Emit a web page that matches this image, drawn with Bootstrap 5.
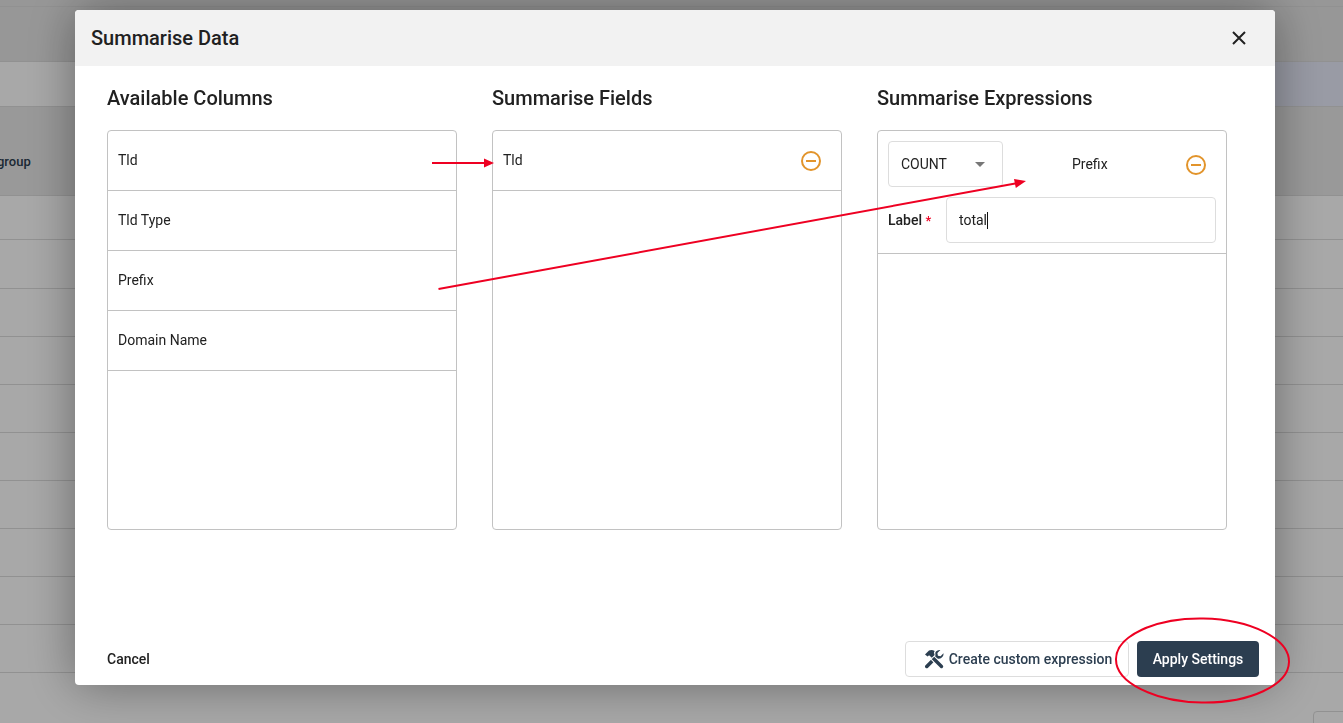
<!DOCTYPE html>
<html lang="en">
<head>
<meta charset="utf-8">
<title>Summarise Data</title>
<link href="https://cdn.jsdelivr.net/npm/bootstrap@5.3.0/dist/css/bootstrap.min.css" rel="stylesheet">
<style>
html,body{height:100%;overflow:hidden}
body{font-family:Roboto,"Liberation Sans",sans-serif;font-size:14px;color:#212121;background:#fff}
.page-rows{display:grid;grid-template-rows:7px 55px 45px 89px 44px 49px repeat(8,48px) 1fr;height:723px}
.page-row{border-bottom:1px solid #ddd;padding-top:48px;color:#2c3e50;font-weight:500;font-size:13px;line-height:14px;overflow:hidden;text-indent:-3px}
.page-row.plain{padding:0}
.row-top{background:#e6e6e6}
.row-sel{background:linear-gradient(90deg,#fff 0 700px,#e8ebfa 700px)}
.row-hover{background:#e9e9e9}
.page-row.last{border:0;position:relative;overflow:visible}
.pager-box{position:absolute;left:1313px;top:38px;width:60px;height:40px;border:1px solid #ddd;border-radius:4px}
.modal-backdrop.show{opacity:.34}
.sum-dialog{max-width:1200px;width:1200px;margin:10px 0 0 75px}
.sum-content{height:675px;border:0;border-radius:4px;box-shadow:0 0 50px rgba(0,0,0,.38)}
.sum-header{height:56px;padding:0 16px;background:#f2f2f2;border:0;border-radius:4px 4px 0 0}
.sum-title{font-size:20px;font-weight:500;line-height:24px;color:#212121}
.sum-close{width:16px;height:16px;padding:0;margin-right:12px;background:none;border:0;line-height:0;color:#212121}
.sum-body{padding:20px 32px 0;gap:35px}
.sum-col{width:350px}
.sum-col-title{font-size:20px;font-weight:500;line-height:24px;margin:0 0 20px;color:#212121}
.sum-panel{height:400px;border:1px solid #c2c2c2;border-radius:4px;overflow:hidden}
.sum-item{height:60px;padding:0 20px 2px 10px;border-bottom:1px solid #c2c2c2;line-height:20px;color:#212121}
.sum-minus{margin-top:2px}
.sum-expr{height:123px;padding:10px;border-bottom:1px solid #c2c2c2;gap:10px}
.sum-select{width:115px;height:46px;padding:0 12px;font-size:14px;color:#212121;border-color:#ddd;border-radius:4px;background-size:10px 5px;background-position:right 17px center;background-image:url("data:image/svg+xml,%3Csvg xmlns='http://www.w3.org/2000/svg' viewBox='0 0 10 5'%3E%3Cpath d='M0 0h10L5 5z' fill='%23777'/%3E%3C/svg%3E")}
.sum-field{width:270px;height:46px;padding:0 12px;font-size:14px;border-color:#ddd;border-radius:4px;color:#212121}
.sum-caret{display:inline-block;width:1px;height:17px;background:#111}
.expr-name{margin-left:69px;width:114px}
.expr-label{width:58px;font-weight:500}
.req{color:#ee0022;font-size:13px}
.sum-footer{height:36px;margin:auto 16px 8px 32px}
.btn-cancel{padding:0;font-size:14px;font-weight:500;color:#212121;border:0}
.btn-custom{width:224px;height:36px;padding:0 0 0 2px;font-size:14px;font-weight:500;color:#2c3e50;background:#fff;border:1px solid #ddd;border-radius:4px;gap:5px}
.btn-apply{width:122px;height:36px;padding:0;font-size:14px;font-weight:500;color:#fff;background:#2c3e50;border:0;border-radius:4px}
.notes{position:fixed;left:0;top:0;width:1343px;height:723px;z-index:1060;pointer-events:none}
</style>
</head>
<body>
<div class="page-rows">
  <div class="page-row plain row-top"></div>
  <div class="page-row plain row-top"></div>
  <div class="page-row plain row-sel"></div>
  <div class="page-row row-hover">group</div>
  <div class="page-row plain"></div>
  <div class="page-row plain"></div>
  <div class="page-row plain"></div>
  <div class="page-row plain"></div>
  <div class="page-row plain"></div>
  <div class="page-row plain"></div>
  <div class="page-row plain"></div>
  <div class="page-row plain"></div>
  <div class="page-row plain"></div>
  <div class="page-row plain"></div>
  <div class="page-row plain last"><div class="pager-box"></div></div>
</div>

<div class="modal-backdrop fade show"></div>
<div class="modal d-block" tabindex="-1">
  <div class="modal-dialog sum-dialog">
    <div class="modal-content sum-content">
      <div class="modal-header sum-header d-flex justify-content-between align-items-center">
        <h5 class="modal-title sum-title">Summarise Data</h5>
        <button type="button" class="sum-close" aria-label="Close">
          <svg width="16" height="16" viewBox="0 0 16 16"><path d="M2 2l12 12M14 2L2 14" stroke="currentColor" stroke-width="2" fill="none"/></svg>
        </button>
      </div>
      <div class="modal-body sum-body d-flex flex-grow-0">
        <div class="sum-col">
          <h6 class="sum-col-title">Available Columns</h6>
          <div class="sum-panel">
            <div class="sum-item d-flex align-items-center">Tld</div>
            <div class="sum-item d-flex align-items-center">Tld Type</div>
            <div class="sum-item d-flex align-items-center">Prefix</div>
            <div class="sum-item d-flex align-items-center">Domain Name</div>
          </div>
        </div>
        <div class="sum-col">
          <h6 class="sum-col-title">Summarise Fields</h6>
          <div class="sum-panel">
            <div class="sum-item d-flex align-items-center justify-content-between">
              <span>Tld</span>
              <svg class="sum-minus" width="20" height="20" viewBox="0 0 20 20"><circle cx="10" cy="10" r="9" fill="none" stroke="#e2942b" stroke-width="2"/><path d="M5 10h10" stroke="#e2942b" stroke-width="2"/></svg>
            </div>
          </div>
        </div>
        <div class="sum-col">
          <h6 class="sum-col-title">Summarise Expressions</h6>
          <div class="sum-panel">
            <div class="sum-expr d-flex flex-column">
              <div class="d-flex align-items-center">
                <select class="form-select sum-select"><option>COUNT</option></select>
                <span class="expr-name">Prefix</span>
                <svg class="sum-minus" width="20" height="20" viewBox="0 0 20 20"><circle cx="10" cy="10" r="9" fill="none" stroke="#e2942b" stroke-width="2"/><path d="M5 10h10" stroke="#e2942b" stroke-width="2"/></svg>
              </div>
              <div class="d-flex align-items-center">
                <span class="expr-label">Label <span class="req">*</span></span>
                <div class="form-control sum-field d-flex align-items-center">total<span class="sum-caret"></span></div>
              </div>
            </div>
          </div>
        </div>
      </div>
      <div class="sum-footer d-flex align-items-center">
        <button type="button" class="btn btn-cancel">Cancel</button>
        <div class="ms-auto d-flex gap-2">
          <button type="button" class="btn btn-custom d-flex align-items-center justify-content-center">
            <svg width="20" height="20" viewBox="0 0 20 20"><path fill="#2c3e50" d="M19.500 4.200l-3 3-2.600-.5-.5-2.600 3-3a5 5 0 0 0-5.700 6L1.300 16.500a1.800 1.800 0 0 0 2.500 2.500l9.400-9.400a5 5 0 0 0 6.300-5.400z"/><path d="M8 8l9.500 9.500" stroke="#fff" stroke-width="5.400"/><path d="M8 8l9.500 9.500" stroke="#2c3e50" stroke-width="3.400" stroke-linecap="round"/><path fill="#fff" d="M0 5.500 5 .5h6l.5 6-3.800 3.800-2.800-2.500-1.600 1.200z"/><path fill="#2c3e50" d="M1 5.500 5 1.500q2.800-1.300 5.700.5l-.8 1.600.7 2.400-2.800 2.800-2.700-2.500-1.500 1.300z"/></svg>
            <span>Create custom expression</span>
          </button>
          <button type="button" class="btn btn-apply">Apply Settings</button>
        </div>
      </div>
    </div>
  </div>
</div>

<svg class="notes" viewBox="0 0 1343 723" aria-hidden="true">
  <g stroke="#ee0022" stroke-width="2" fill="none">
    <path d="M432 163H486"/>
    <path d="M438.500 289 1018 183"/>
    <ellipse cx="1202.500" cy="660.500" rx="86.500" ry="42" transform="rotate(1 1202.500 660.500)"/>
  </g>
  <path d="M494 163l-10-4.500v9z" fill="#ee0022"/>
  <path d="M1026 181l-12-2 1.800 9z" fill="#ee0022"/>
</svg>
<script src="https://cdn.jsdelivr.net/npm/bootstrap@5.3.0/dist/js/bootstrap.bundle.min.js"></script>
</body>
</html>
